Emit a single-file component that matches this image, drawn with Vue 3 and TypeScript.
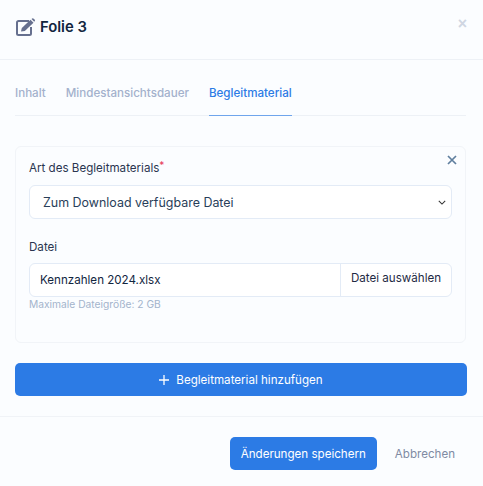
<script setup lang="ts">
const tabs: string[] = ['Inhalt', 'Mindestansichtsdauer', 'Begleitmaterial']
</script>

<template>
  <div class="modal">
    <header class="head">
      <div class="title">
        <svg class="edit" viewBox="0 0 20 18" width="20" height="18">
          <path d="M13 3H2.500A1.500 1.500 0 0 0 1 4.500V15.500A1.500 1.500 0 0 0 2.500 17H13.500A1.500 1.500 0 0 0 15 15.500V9" fill="none" stroke="#66708f" stroke-width="2"/>
          <path d="M5 13.500L5.800 10L14.500 1.800L17.500 4.800L8.800 13Z" fill="#66708f"/>
          <path d="M15.500 1L16.200 .4Q16.800 0 17.400 .4L18.800 1.800Q19.300 2.400 18.800 3L18.200 3.700Z" fill="#66708f"/>
        </svg>
        <h1>Folie 3</h1>
      </div>
      <button class="close" aria-label="Schließen">×</button>
    </header>

    <nav class="tabs">
      <a v-for="(t, i) in tabs" :key="t" class="tab" :class="{ active: i === 2 }">{{ t }}</a>
    </nav>

    <section class="card">
      <svg class="remove" viewBox="0 0 10 10" width="10" height="10">
        <path d="M1 1L9 9M9 1L1 9" stroke="#5f7f9e" stroke-width="1.700" fill="none"/>
      </svg>
      <label class="label first">Art des Begleitmaterials<span class="req">*</span></label>
      <div class="select">
        <span>Zum Download verfügbare Datei</span>
        <svg viewBox="0 0 10 6" width="8" height="5"><path d="M1 1L5 5L9 1" stroke="#333" stroke-width="1.300" fill="none"/></svg>
      </div>
      <label class="label second">Datei</label>
      <div class="file">
        <span class="name">Kennzahlen 2024.xlsx</span>
        <span class="pick">Datei auswählen</span>
      </div>
      <p class="hint">Maximale Dateigröße: 2 GB</p>
    </section>

    <button class="add">
      <svg viewBox="0 0 10 10" width="10" height="10"><path d="M5 0V10M0 5H10" stroke="#fff" stroke-width="1.300"/></svg>
      Begleitmaterial hinzufügen
    </button>

    <footer class="foot">
      <button class="save">Änderungen speichern</button>
      <button class="cancel">Abbrechen</button>
    </footer>
  </div>
</template>

<style scoped>
.modal {
  width: 483px;
  height: 486px;
  box-sizing: border-box;
  background: #fbfdff;
  font-family: Inter, "Liberation Sans", sans-serif;
  font-size: 11.600px;
  color: #1f2a44;
  overflow: hidden;
}
.head {
  height: 60px;
  box-sizing: border-box;
  border-bottom: 1px solid #edf1f6;
  padding: 0 16px;
  display: flex;
  justify-content: space-between;
  align-items: flex-start;
}
.title { display: flex; align-items: center; gap: 4px; margin-top: 18px; }
.edit { display: block; }
h1 { margin: 0; font-size: 14.800px; font-weight: 600; line-height: 18px; color: #12263f; }
.close {
  border: 0; background: none; padding: 0; margin: 14px 0 0;
  font: 700 16px/20px "Liberation Sans", sans-serif; color: #cfd6e2;
}
.tabs {
  margin: 20px 17px 0 15px;
  height: 35px;
  display: flex;
  gap: 20px;
  border-bottom: 1px solid #edf1f6;
}
.tab { color: #a3b1cc; font-weight: 500; line-height: 24px; height: 36px; box-sizing: border-box; padding-top: 1px; }
.tab.active { color: #2c7be5; border-bottom: 1px solid #6fa5ec; }
.card {
  position: relative;
  margin: 30px 17px 0 15px;
  height: 197px;
  box-sizing: border-box;
  border: 1px solid #f1f4f8;
  border-radius: 6px;
  padding: 0 13px;
}
.remove { position: absolute; top: 8px; right: 8px; }
.label { display: block; line-height: 16px; color: #2a3550; }
.first { margin-top: 13px; }
.second { margin-top: 20px; }
.req { color: #e63757; font-size: 10px; line-height: 0; vertical-align: 3px; }
.select {
  margin-top: 9px;
  height: 34px;
  box-sizing: border-box;
  background: #fff;
  border: 1px solid #e3ebf6;
  border-radius: 6px;
  padding: 0 5px 0 13px;
  display: flex;
  align-items: center;
  justify-content: space-between;
  font-size: 12.450px;
  color: #283e59;
}
.file {
  margin-top: 8px;
  height: 34px;
  box-sizing: border-box;
  background: #fff;
  border: 1px solid #e3ebf6;
  border-radius: 6px;
  display: flex;
  align-items: center;
}
.name { flex: 1; padding-left: 10px; color: #12263f; }
.pick {
  width: 111px;
  height: 32px;
  line-height: 29px;
  box-sizing: border-box;
  text-align: center;
  border-left: 1px solid #e3ebf6;
}
.hint { margin: 0; font-size: 10.250px; line-height: 14px; color: #a3b4cc; }
button { font-family: inherit; cursor: pointer; }
.add {
  display: flex;
  align-items: center;
  justify-content: center;
  gap: 7px;
  width: 452px;
  height: 33px;
  margin: 20px 0 0 15px;
  border: 0;
  border-radius: 5px;
  background: #2c7be5;
  color: #fff;
  font-size: 11.600px;
}
.foot {
  margin-top: 20px;
  height: 70px;
  box-sizing: border-box;
  border-top: 1px solid #f0f3f7;
  padding: 20px 28px 0 0;
  display: flex;
  justify-content: flex-end;
  align-items: flex-start;
  gap: 18px;
}
.save {
  width: 147px;
  height: 33px;
  border: 0;
  border-radius: 5px;
  background: #2c7be5;
  color: #fff;
  font-size: 11.600px;
}
.cancel {
  border: 0;
  background: none;
  padding: 0;
  height: 33px;
  color: #7f8ba3;
  font-size: 11.600px;
}
</style>
